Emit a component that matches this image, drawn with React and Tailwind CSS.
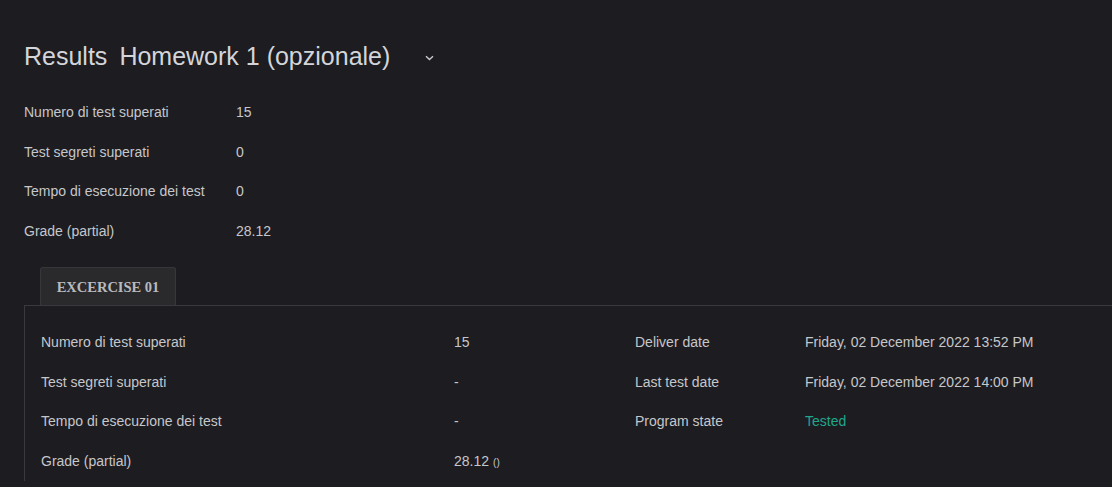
export default function App() {
  const top = [
    ["Numero di test superati", "15"],
    ["Test segreti superati", "0"],
    ["Tempo di esecuzione dei test", "0"],
    ["Grade (partial)", "28.12"],
  ];
  const rows = [
    ["Numero di test superati", "15", "Deliver date", "Friday, 02 December 2022 13:52 PM"],
    ["Test segreti superati", "-", "Last test date", "Friday, 02 December 2022 14:00 PM"],
    ["Tempo di esecuzione dei test", "-", "Program state", "Tested"],
    ["Grade (partial)", "28.12", "", ""],
  ];
  return (
    <div
      className="w-[1112px] h-[487px] overflow-hidden bg-[#1d1c21] text-[#c6c7ca] pl-6 pt-[41px]"
      style={{ fontFamily: '"Liberation Sans", Arial, sans-serif' }}
    >
      <div className="flex items-center h-8 text-[25px] text-[#d3d5d9]">
        <span>Results</span>
        <span className="ml-[12px]">Homework 1 (opzionale)</span>
        <svg className="ml-[35px] mt-[1px]" width="9" height="6" viewBox="0 0 9 6">
          <path d="M1 1.2 L4.5 4.6 L8 1.2" fill="none" stroke="#c8cace" strokeWidth="1.4" />
        </svg>
      </div>
      <div className="mt-[20px] text-[14px]">
        {top.map(([l, v]) => (
          <div key={l} className="flex items-center h-[39.5px]">
            <span className="w-[212px]">{l}</span>
            <span>{v}</span>
          </div>
        ))}
      </div>
      <div className="mt-[16px] pl-4 flex">
        <div className="h-[38px] w-[136px] flex items-center justify-center bg-[#2a2a2d] border border-b-0 border-[#37373b] rounded-t-[3px]">
          <span
            className="font-bold text-[14.5px] text-[#b9babd] pt-[2px]"
            style={{ fontFamily: '"Liberation Serif", "Times New Roman", serif' }}
          >
            EXCERCISE 01
          </span>
        </div>
      </div>
      <div className="border-t border-l border-[#3a3a3e] pl-[16px] pt-[17px] text-[14px]">
        {rows.map(([a, b, c, d]) => (
          <div key={a} className="grid grid-cols-[413px_181px_170px_1fr] items-center h-[39.5px]">
            <span>{a}</span>
            <span>
              {b}
              {a === "Grade (partial)" && <span className="ml-1 text-[10px]">()</span>}
            </span>
            <span>{c}</span>
            <span className={d === "Tested" ? "text-[#1fa78c]" : ""}>{d}</span>
          </div>
        ))}
      </div>
    </div>
  );
}
